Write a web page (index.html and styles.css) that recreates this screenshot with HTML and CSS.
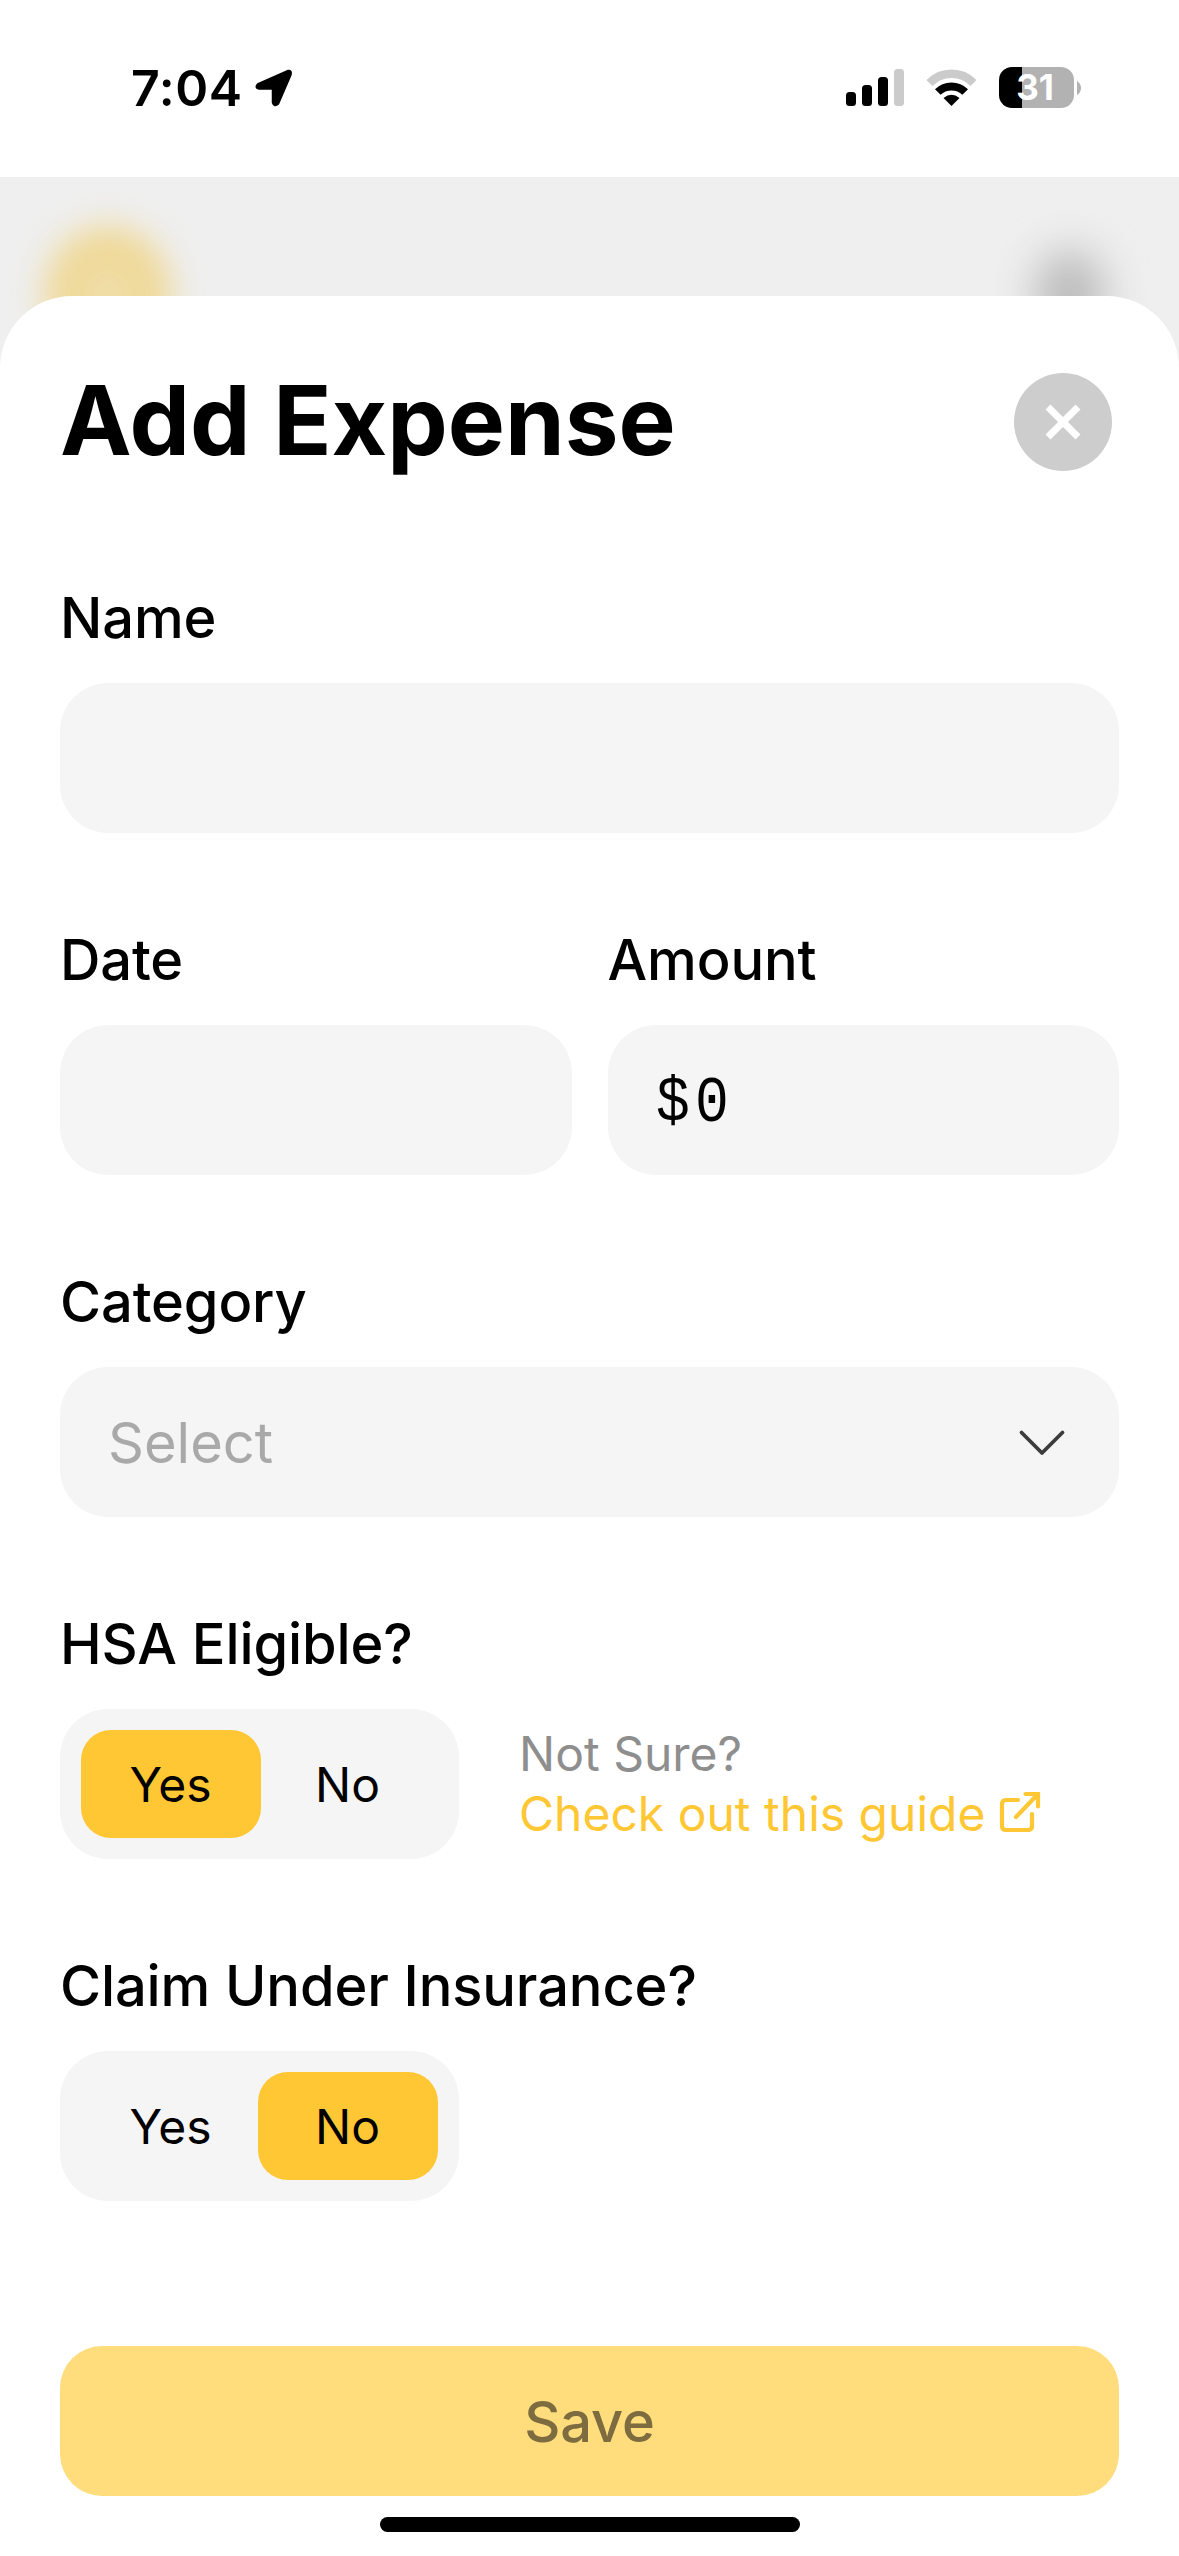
FILE: index.html
```html
<!DOCTYPE html>
<html lang="en">
<head>
<meta charset="utf-8">
<title>Add Expense</title>
<link rel="stylesheet" href="styles.css">
</head>
<body>
<div class="screen">
  <header class="status">
    <div class="status-left">
      <span class="time">7:04</span>
      <svg class="location" width="40" height="40" viewBox="0 0 40 40"><path d="M4.500 16.500 L34 3.500 Q37 3 36 6.500 L23.500 35.500 Q20.500 38 19.500 34.500 V20 H5 Q1.500 19.500 4.500 16.500 Z" fill="#000" stroke="#000" stroke-width="3.500" stroke-linejoin="round"/></svg>
    </div>
    <div class="status-right">
      <svg class="signal" width="58" height="38" viewBox="0 0 58 38"><rect x="0" y="23" width="10" height="14" rx="3.500"/><rect x="16" y="16" width="10" height="21" rx="3.500"/><rect x="32" y="8" width="10" height="29" rx="3.500"/><rect x="48" y="0" width="10" height="37" rx="3.500" fill="#cbcbcb"/></svg>
      <svg class="wifi" width="51" height="38" viewBox="0 0 51 38"><path d="M3.500 14 A31 31 0 0 1 47.500 14" fill="none" stroke="#cbcbcb" stroke-width="8.500"/><path d="M11.800 23 A19.500 19.500 0 0 1 39.200 23" fill="none" stroke="#000" stroke-width="8"/><path d="M25.500 37 L17.500 29 Q25.500 22.500 33.500 29 Z"/></svg>
      <div class="battery"><span class="battery-level">31</span></div>
      <svg class="nub" width="4" height="14" viewBox="0 0 4 14"><path d="M0 0 Q4 2.500 4 7 T0 14 Z" fill="#b2b2b2"/></svg>
    </div>
  </header>
  <main class="backdrop">
    <div class="blob blob-avatar"></div>
    <div class="blob blob-menu"></div>
    <form class="sheet">
      <div class="heading">
        <h1 class="title">Add Expense</h1>
        <button class="close" type="button" aria-label="Close"><svg width="36" height="36" viewBox="0 0 36 36"><path d="M3 3 L33 33 M33 3 L3 33" stroke="#fff" stroke-width="7"/></svg></button>
      </div>
      <section class="group">
        <div class="label">Name</div>
        <div class="field"></div>
      </section>
      <div class="columns">
        <section class="group">
          <div class="label">Date</div>
          <div class="field"></div>
        </section>
        <section class="group">
          <div class="label">Amount</div>
          <div class="field"><span class="amount">$0</span></div>
        </section>
      </div>
      <section class="group">
        <div class="label">Category</div>
        <div class="field select"><span class="placeholder">Select</span><svg class="chevron" width="48" height="28" viewBox="0 0 48 28"><path d="M3.500 3.500 L24 24 L44.500 3.500" fill="none" stroke="#3c3c3c" stroke-width="3.800" stroke-linecap="round" stroke-linejoin="round"/></svg></div>
      </section>
      <section class="group">
        <div class="label">HSA Eligible?</div>
        <div class="choice">
          <div class="segmented"><span class="option selected">Yes</span><span class="option">No</span></div>
          <div class="hint">
            <span class="hint-text">Not Sure?</span>
            <a class="guide"><span class="guide-text">Check out this guide</span><svg width="42" height="42" viewBox="0 0 42 42"><path d="M19 9 H7 Q3 9 3 13 V35 Q3 39 7 39 H29 Q33 39 33 35 V23 M26.500 3 H39 V15.500 M39 3 L17 26" fill="none" stroke="#ffc734" stroke-width="4.200" stroke-linecap="round"/></svg></a>
          </div>
        </div>
      </section>
      <section class="group">
        <div class="label">Claim Under Insurance?</div>
        <div class="segmented"><span class="option">Yes</span><span class="option selected">No</span></div>
      </section>
      <button class="save" type="button">Save</button>
      <div class="home-indicator"></div>
    </form>
  </main>
</div>
</body>
</html>
```
FILE: styles.css
```css
* { box-sizing: border-box; }
body { margin: 0; background: #fff; font-family: Inter, "Liberation Sans", sans-serif; color: #000; }
.screen { width: 1179px; height: 2556px; display: flex; flex-direction: column; overflow: hidden; }

.status { height: 177px; padding: 67px 98px 0 131px; display: flex; justify-content: space-between; }
.status-left { display: flex; align-items: flex-start; gap: 11px; padding-top: 1px; }
.time { font-size: 50px; line-height: 40px; font-weight: 560; letter-spacing: 0.6px; }
.status-right { display: flex; align-items: flex-start; }
.signal { margin: 2px 22px 0 0; }
.wifi { margin: 2px 22px 0 0; }
.battery { width: 75px; height: 41px; border-radius: 13px; display: flex; justify-content: center; align-items: center; background: linear-gradient(90deg, #000 23px, #b2b2b2 23px); }
.battery-level { margin-right: 3px; color: #fff; font-size: 35px; line-height: 41px; font-weight: 700; }
.nub { margin: 14px 0 0 3px; }

.backdrop { position: relative; flex: 1; padding-top: 119px; background: #efefef; overflow: hidden; }
.blob { position: absolute; border-radius: 50%; }
.blob-avatar { left: 46px; top: 51px; width: 124px; height: 132px; background: radial-gradient(circle, #f0dfae 15%, #efd488 60%); filter: blur(17px); }
.blob-menu { left: 1034px; top: 73px; width: 72px; height: 90px; background: #bcbcbc; filter: blur(20px); }

.sheet { position: relative; height: 2260px; padding: 74px 60px 0; border-radius: 72px 72px 0 0; background: #fff; display: flex; flex-direction: column; }
.heading { height: 104px; margin-bottom: 83px; padding-right: 7px; display: flex; justify-content: space-between; align-items: center; }
.title { margin: 0; font-size: 96px; line-height: 100px; padding-bottom: 4px; font-weight: 700; }
.close { width: 98px; height: 98px; border: 0; padding: 0; border-radius: 50%; background: #cdcdcd; display: flex; align-items: center; justify-content: center; }

.group { display: flex; flex-direction: column; gap: 30px; height: 276px; margin-bottom: 66px; }
.columns { display: grid; grid-template-columns: 1fr 1fr; gap: 36px; }
.label { height: 96px; padding-top: 25px; font-size: 56px; line-height: 72px; font-weight: 500; letter-spacing: -0.12px; white-space: nowrap; }
.field { height: 150px; flex: none; border-radius: 48px; background: #f5f5f5; padding: 0 48px; display: flex; align-items: center; }
.select { justify-content: space-between; padding-right: 53px; }
.placeholder { padding-top: 2px; font-size: 56px; color: #a9a9a9; }
.chevron { margin-top: 2px; }
.amount { padding-top: 8px; font-family: "Liberation Mono", monospace; font-size: 64px; letter-spacing: 6px; transform: scaleX(0.88); transform-origin: left center; }

.choice { display: flex; align-items: center; gap: 60px; }
.segmented { width: 399px; height: 150px; flex: none; padding: 21px; border-radius: 48px; background: #f5f5f5; display: flex; }
.option { width: 180px; height: 108px; padding-right: 1px; border-radius: 30px; font-size: 48px; display: flex; align-items: center; justify-content: center; }
.option + .option { margin-left: -3px; }
.selected { background: #ffc734; }
.hint { display: flex; flex-direction: column; font-size: 48px; line-height: 60px; white-space: nowrap; }
.hint-text { color: #8e8e8e; }
.guide { display: flex; color: #ffc734; gap: 14px; }
.guide svg { margin-top: 7px; }

.save { height: 150px; flex: none; margin-top: 79px; border: 0; padding: 2px 0 0; border-radius: 42px; background: #ffdd7c; color: #7c6c3f; font: 500 56px Inter, sans-serif; letter-spacing: -0.12px; }
.home-indicator { width: 420px; height: 15px; flex: none; margin: 21px auto 0; border-radius: 8px; background: #000; }
```
